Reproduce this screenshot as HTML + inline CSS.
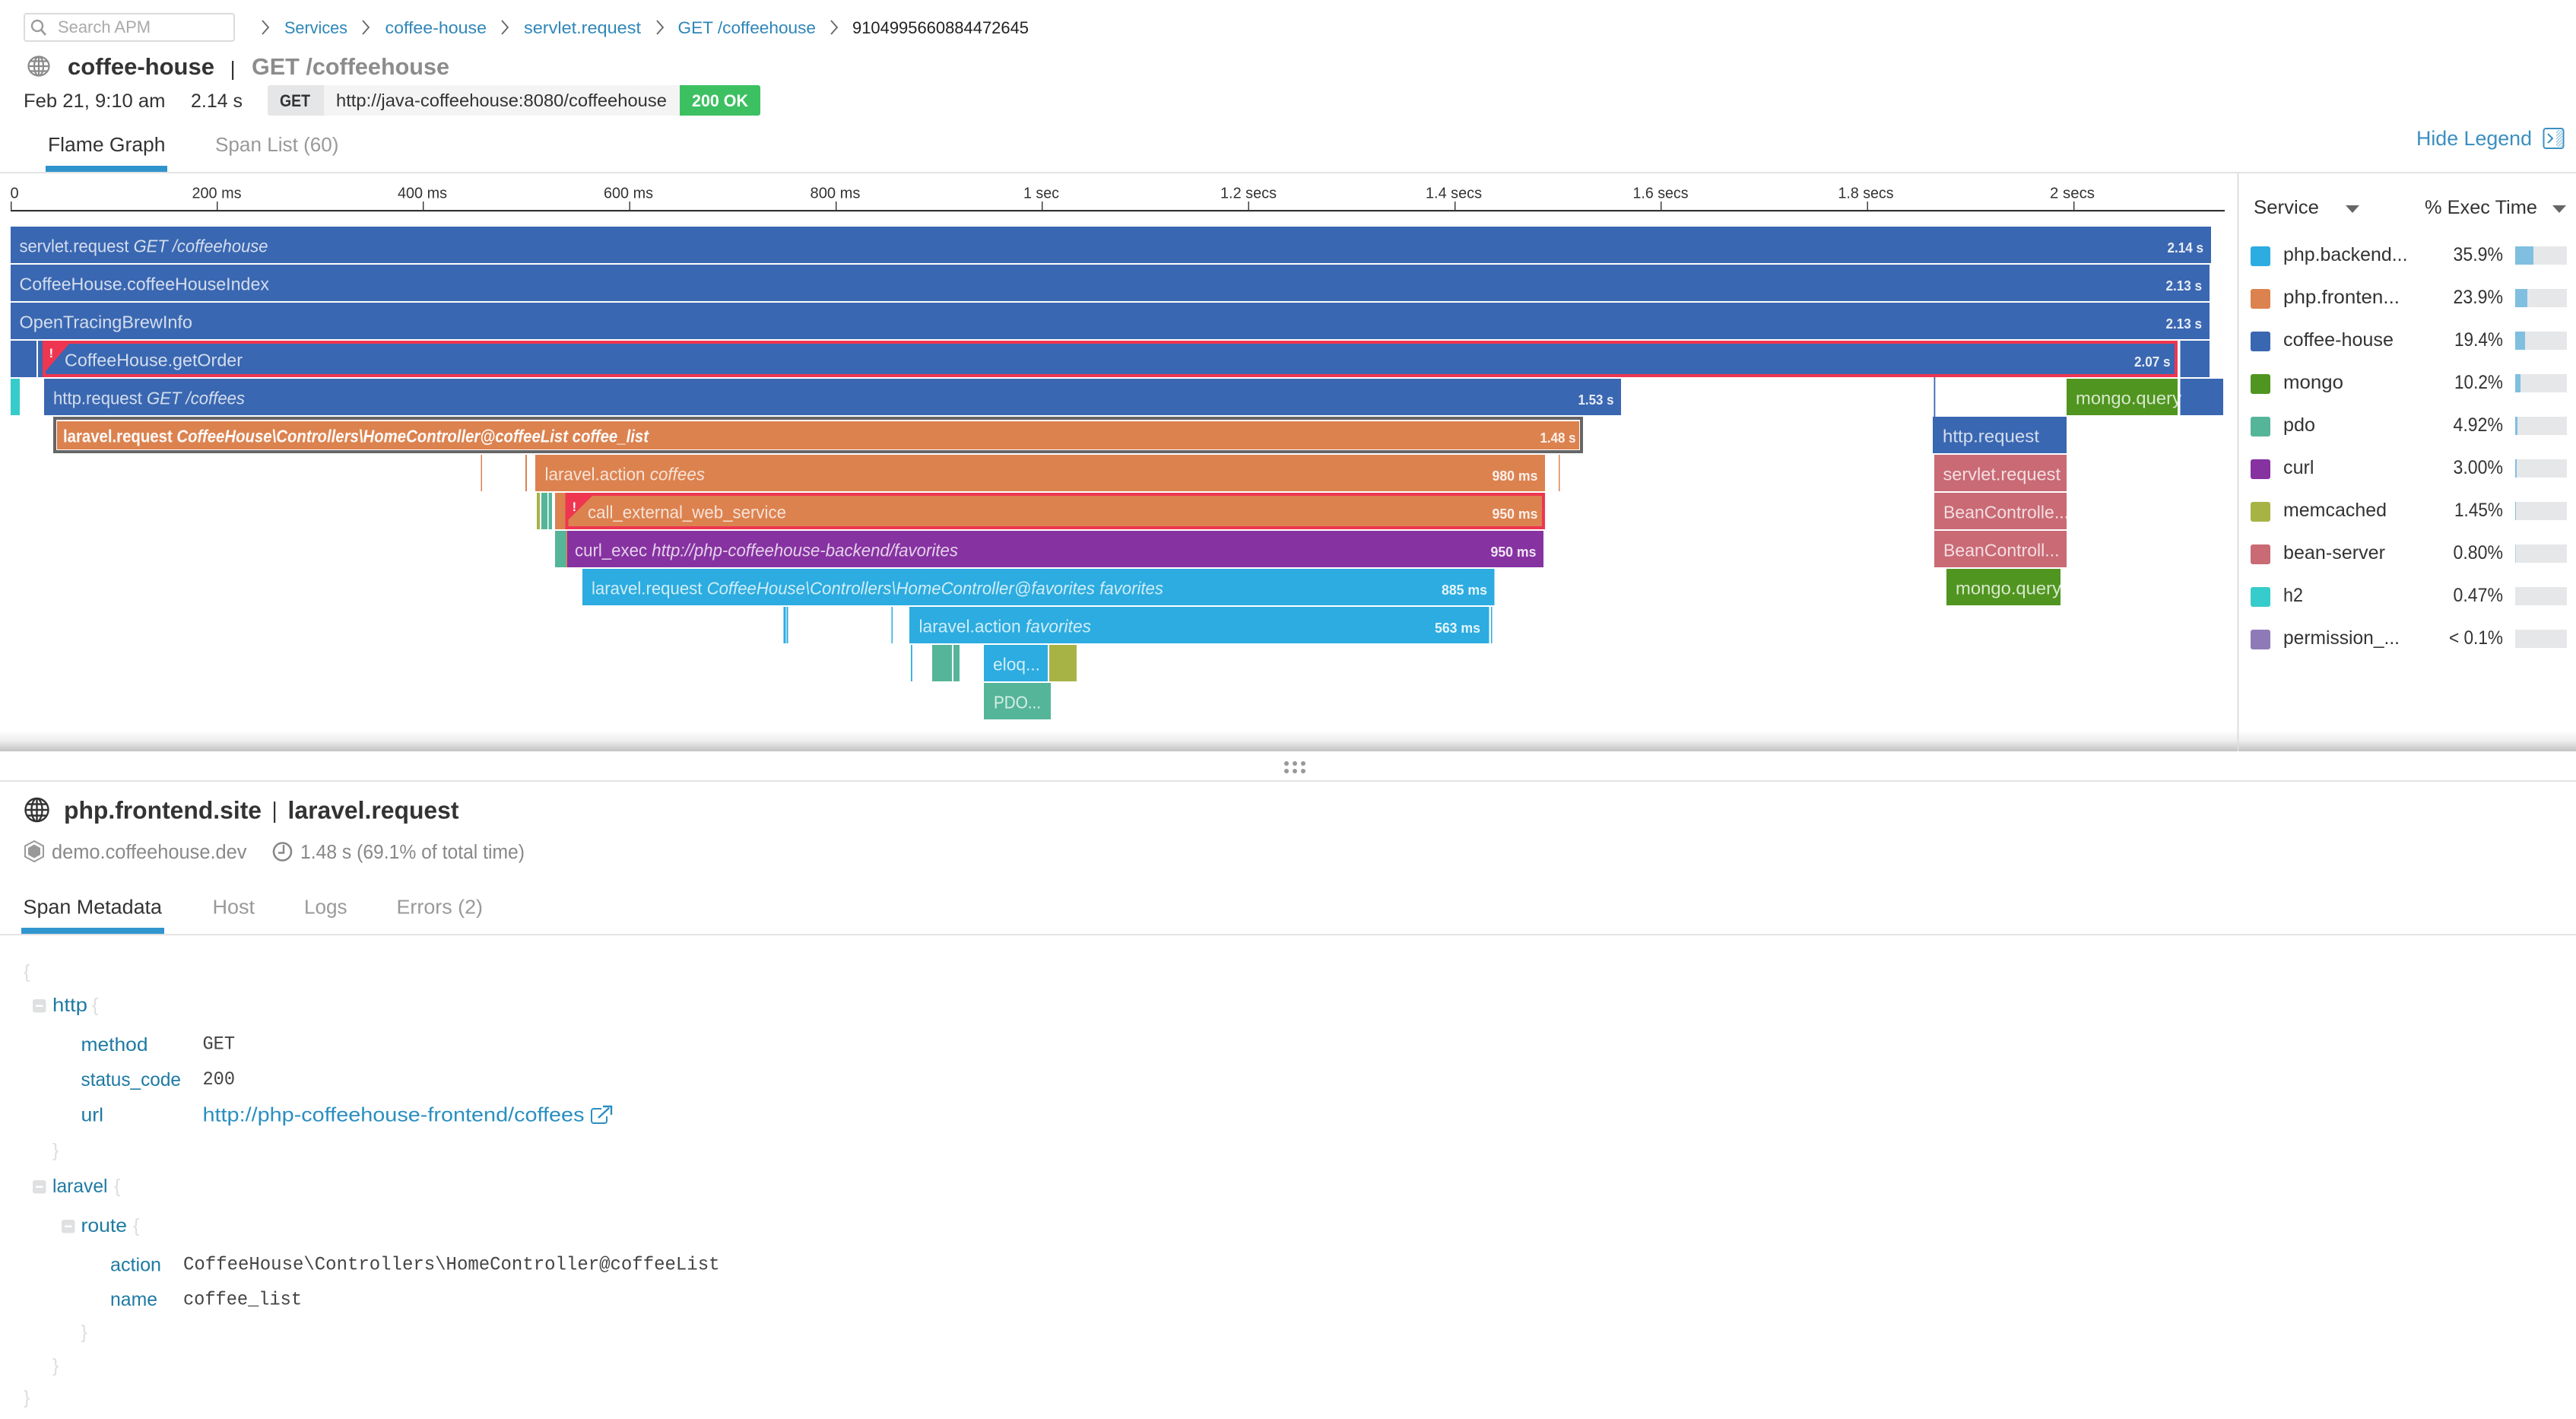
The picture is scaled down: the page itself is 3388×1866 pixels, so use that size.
<!DOCTYPE html>
<html><head><meta charset="utf-8"><title>coffee-house | GET /coffeehouse</title>
<style>
html,body{margin:0;padding:0;background:#fff;width:3388px;height:1866px;overflow:hidden}
svg{display:block}
text{font-family:"Liberation Sans",sans-serif;white-space:pre}
.b{font-size:23px;fill:#fff;fill-opacity:.78}
.d{font-size:18.5px;fill:#fff;fill-opacity:.88;font-weight:700}
.t{font-size:20px;fill:#333;text-anchor:middle}
.lk{font-size:22.5px;fill:#2f86b8}
.c{font-size:21.6px;fill:#666}
.lg{font-size:25px;fill:#333}
.k{font-size:25px;fill:#1e7aa3}
.m{font-family:"Liberation Mono",monospace;font-size:25px;fill:#444}
.br{font-size:25px;fill:#dedede}
.i{font-style:italic}
</style></head><body>
<svg width="3388" height="1866" viewBox="0 0 3388 1866" xmlns="http://www.w3.org/2000/svg">
<defs>
<linearGradient id="sh" x1="0" y1="0" x2="0" y2="1"><stop offset="0" stop-color="#fff"/><stop offset=".5" stop-color="#eee"/><stop offset="1" stop-color="#c2c2c2"/></linearGradient>
<clipPath id="c1"><rect x="2544" y="648" width="174" height="48"/></clipPath>
<clipPath id="c2"><rect x="2560" y="748" width="150" height="48"/></clipPath>
<clipPath id="c3"><rect x="3362" y="171" width="8" height="22"/></clipPath>
</defs>
<rect width="3388" height="1866" fill="#fff"/>

<!-- top bar -->
<rect x="32" y="18" width="276" height="36" rx="3" fill="#fff" stroke="#dcdcdc" stroke-width="2"/>
<circle cx="49" cy="34" r="7" fill="none" stroke="#9a9a9a" stroke-width="2.4"/><path d="M54 39L60 46" stroke="#9a9a9a" stroke-width="2.6"/>
<text x="76" y="43" font-size="22.5" fill="#aaa" textLength="122" lengthAdjust="spacingAndGlyphs">Search APM</text>
<g fill="none" stroke="#666" stroke-width="1.8">
<path d="M345 27L353 36L345 45"/><path d="M477 27L485 36L477 45"/><path d="M660 27L668 36L660 45"/><path d="M864 27L872 36L864 45"/><path d="M1093 27L1101 36L1093 45"/>
</g>
<text class="lk" x="374" y="44" textLength="83" lengthAdjust="spacingAndGlyphs">Services</text>
<text class="lk" x="506.500" y="44" textLength="133.500" lengthAdjust="spacingAndGlyphs">coffee-house</text>
<text class="lk" x="689" y="44" textLength="154" lengthAdjust="spacingAndGlyphs">servlet.request</text>
<text class="lk" x="891.500" y="44" textLength="181.500" lengthAdjust="spacingAndGlyphs">GET /coffeehouse</text>
<text x="1121" y="44" font-size="22.5" fill="#222" textLength="232" lengthAdjust="spacingAndGlyphs">9104995660884472645</text>

<!-- title -->
<g fill="none" stroke="#8a8a8a" stroke-width="2.2"><ellipse cx="51" cy="87" rx="13.500" ry="12.500"/><ellipse cx="51" cy="87" rx="6" ry="12.500"/><path d="M51 74.500V99.500M37.500 87H64.500M39.500 80.500H62.500M39.500 93.500H62.500"/></g>
<text x="89" y="98" font-size="31" font-weight="700" fill="#333" textLength="193" lengthAdjust="spacingAndGlyphs">coffee-house</text>
<rect x="305" y="80" width="2.200" height="25" fill="#333"/>
<text x="331" y="98" font-size="31" font-weight="700" fill="#8c8c8c" textLength="260" lengthAdjust="spacingAndGlyphs">GET /coffeehouse</text>

<text x="31" y="141" font-size="25" fill="#333" textLength="186.500" lengthAdjust="spacingAndGlyphs">Feb 21, 9:10 am</text>
<text x="251" y="141" font-size="25" fill="#333" textLength="68" lengthAdjust="spacingAndGlyphs">2.14 s</text>
<path d="M355 112H894V152H355a3 3 0 0 1-3-3V115a3 3 0 0 1 3-3Z" fill="#f4f4f5"/>
<path d="M355 112H426V152H355a3 3 0 0 1-3-3V115a3 3 0 0 1 3-3Z" fill="#e5e6e8"/>
<path d="M894 112H997a3 3 0 0 1 3 3V149a3 3 0 0 1-3 3H894Z" fill="#3cc062"/>
<text x="368" y="140" font-size="22" font-weight="700" fill="#333" textLength="40" lengthAdjust="spacingAndGlyphs">GET</text>
<text x="442" y="140" font-size="23" fill="#333" textLength="435" lengthAdjust="spacingAndGlyphs">http://java-coffeehouse:8080/coffeehouse</text>
<text x="910" y="140" font-size="22" font-weight="700" fill="#fff" textLength="74" lengthAdjust="spacingAndGlyphs">200 OK</text>

<text x="63" y="199" font-size="25.500" fill="#333" textLength="154.500" lengthAdjust="spacingAndGlyphs">Flame Graph</text>
<text x="283" y="199" font-size="25.500" fill="#999" textLength="162.500" lengthAdjust="spacingAndGlyphs">Span List (60)</text>
<rect x="0" y="226" width="3388" height="2" fill="#e3e3e3"/>
<rect x="60" y="218" width="160" height="8" fill="#2f93cc"/>

<text x="3178" y="191" font-size="27" fill="#3b8fc0" textLength="152" lengthAdjust="spacingAndGlyphs">Hide Legend</text>
<rect x="3345.500" y="169" width="26" height="26" rx="3" fill="none" stroke="#3b8fc0" stroke-width="2"/>
<path d="M3351 176L3357 182L3351 188" fill="none" stroke="#3b8fc0" stroke-width="2"/>
<g clip-path="url(#c3)" stroke="#8fc0dc" stroke-width="1.2"><path d="M3358 175L3372 161M3358 179L3372 165M3358 183L3372 169M3358 187L3372 173M3358 191L3372 177M3358 195L3372 181M3358 199L3372 185M3358 203L3372 189"/></g>

<!-- axis -->
<rect x="14" y="276" width="2912" height="2.200" fill="#333"/>
<g fill="#333"><rect x="14" y="265" width="1.400" height="11"/><rect x="285" y="265" width="1.400" height="11"/><rect x="556" y="265" width="1.400" height="11"/><rect x="827.500" y="265" width="1.400" height="11"/><rect x="1099" y="265" width="1.400" height="11"/><rect x="1370" y="265" width="1.400" height="11"/><rect x="1641.500" y="265" width="1.400" height="11"/><rect x="1913" y="265" width="1.400" height="11"/><rect x="2184" y="265" width="1.400" height="11"/><rect x="2455.500" y="265" width="1.400" height="11"/><rect x="2727" y="265" width="1.400" height="11"/></g>
<text class="t" x="19" y="260.500">0</text>
<text class="t" x="285" y="260.500" textLength="65" lengthAdjust="spacingAndGlyphs" style="text-anchor:start" dx="-32.500">200 ms</text>
<text class="t" x="556" y="260.500" textLength="65" lengthAdjust="spacingAndGlyphs" style="text-anchor:start" dx="-33">400 ms</text>
<text class="t" x="827" y="260.500" textLength="65" lengthAdjust="spacingAndGlyphs" style="text-anchor:start" dx="-33">600 ms</text>
<text class="t" x="1098.500" y="260.500" textLength="66" lengthAdjust="spacingAndGlyphs" style="text-anchor:start" dx="-33">800 ms</text>
<text class="t" x="1370" y="260.500" textLength="47" lengthAdjust="spacingAndGlyphs" style="text-anchor:start" dx="-24">1 sec</text>
<text class="t" x="1642" y="260.500" textLength="74" lengthAdjust="spacingAndGlyphs" style="text-anchor:start" dx="-37">1.2 secs</text>
<text class="t" x="1912" y="260.500" textLength="74" lengthAdjust="spacingAndGlyphs" style="text-anchor:start" dx="-37">1.4 secs</text>
<text class="t" x="2183.500" y="260.500" textLength="73" lengthAdjust="spacingAndGlyphs" style="text-anchor:start" dx="-36">1.6 secs</text>
<text class="t" x="2454.500" y="260.500" textLength="73" lengthAdjust="spacingAndGlyphs" style="text-anchor:start" dx="-37">1.8 secs</text>
<text class="t" x="2725.500" y="260.500" textLength="59" lengthAdjust="spacingAndGlyphs" style="text-anchor:start" dx="-29.500">2 secs</text>

<!-- flame bars -->
<g fill="#3a67b1">
<rect x="14" y="298" width="2894" height="48"/>
<rect x="14" y="348" width="2892" height="48"/>
<rect x="14" y="398" width="2892" height="48"/>
<rect x="14" y="448" width="34" height="48"/>
<rect x="50" y="448" width="6" height="48"/>
<rect x="2867.500" y="448" width="38.500" height="48"/>
<rect x="58" y="498" width="2074" height="48"/>
<rect x="2543.500" y="496" width="1.800" height="52"/>
<rect x="2867.500" y="498" width="56.500" height="48"/>
<rect x="2542" y="548" width="176" height="48"/>
</g>
<rect x="58" y="450" width="2804" height="44" fill="#3a67b1" stroke="#ee3650" stroke-width="4"/>
<polygon points="59,452 91,452 60,488 59,488" fill="#ee3650"/>
<text x="64.500" y="470" font-size="17" fill="#fff" font-weight="700">!</text>
<rect x="14" y="498" width="12" height="48" fill="#36cccb"/>
<rect x="2718" y="498" width="146" height="48" fill="#4f951f"/>

<rect x="72" y="550" width="2008" height="44" fill="#fff" stroke="#666" stroke-width="4"/>
<rect x="75" y="554" width="2002" height="37" fill="#dc824f"/>

<g fill="#dc824f">
<rect x="632.500" y="598" width="1.500" height="48"/>
<rect x="691" y="598" width="2" height="48"/>
<rect x="704" y="598" width="1328" height="48"/>
<rect x="2050" y="598" width="1.500" height="48"/>
<rect x="730" y="648" width="14" height="48"/>
<rect x="744.500" y="698" width="1.500" height="48"/>
</g>
<rect x="706" y="648" width="4" height="48" fill="#a8b345"/>
<rect x="712" y="648" width="8" height="48" fill="#55b598"/>
<rect x="721.500" y="648" width="4.500" height="48" fill="#55b598"/>
<rect x="745.500" y="650" width="1284.500" height="44" fill="#dc824f" stroke="#ee3650" stroke-width="4"/>
<polygon points="747,652 779,652 748,683 747,683" fill="#ee3650"/>
<text x="752.500" y="672" font-size="17" fill="#fff" font-weight="700">!</text>
<rect x="730" y="698" width="14.500" height="48" fill="#55b598"/>
<rect x="746" y="698" width="1284" height="48" fill="#8632a1"/>
<g fill="#2cace0">
<rect x="766" y="748" width="1199.500" height="48"/>
<rect x="1030.500" y="798" width="3" height="48"/>
<rect x="1034.500" y="798" width="2" height="48"/>
<rect x="1172.500" y="798" width="1.500" height="48"/>
<rect x="1196" y="798" width="762.500" height="48"/>
<rect x="1961" y="798" width="1.500" height="48"/>
<rect x="1198" y="848" width="1.800" height="48"/>
<rect x="1294" y="848" width="84" height="48"/>
</g>
<rect x="1226" y="848" width="26" height="48" fill="#55b598"/>
<rect x="1254" y="848" width="8" height="48" fill="#55b598"/>
<rect x="1380" y="848" width="36" height="48" fill="#a8b345"/>
<rect x="1294" y="898" width="88" height="48" fill="#55b598"/>
<rect x="2544" y="598" width="174" height="48" fill="#c96a75"/>
<rect x="2544" y="648" width="174" height="48" fill="#c96a75"/>
<rect x="2544" y="698" width="174" height="48" fill="#c96a75"/>
<rect x="2560" y="748" width="150" height="48" fill="#4f951f"/>

<!-- bar labels -->
<text class="b" x="25.500" y="331.500" textLength="327" lengthAdjust="spacingAndGlyphs">servlet.request <tspan class="i">GET /coffeehouse</tspan></text>
<text class="b" x="25.500" y="381.500" textLength="328.500" lengthAdjust="spacingAndGlyphs">CoffeeHouse.coffeeHouseIndex</text>
<text class="b" x="25.500" y="431.500" textLength="227.500" lengthAdjust="spacingAndGlyphs">OpenTracingBrewInfo</text>
<text class="b" x="85" y="481.500" textLength="234" lengthAdjust="spacingAndGlyphs">CoffeeHouse.getOrder</text>
<text class="b" x="70" y="531.500" textLength="252" lengthAdjust="spacingAndGlyphs">http.request <tspan class="i">GET /coffees</tspan></text>
<text class="b" x="83" y="581.500" textLength="770" lengthAdjust="spacingAndGlyphs" font-weight="700" style="fill-opacity:.97">laravel.request <tspan class="i">CoffeeHouse\Controllers\HomeController@coffeeList coffee_list</tspan></text>
<text class="b" x="716.500" y="631.500" textLength="210.500" lengthAdjust="spacingAndGlyphs">laravel.action <tspan class="i">coffees</tspan></text>
<text class="b" x="773" y="681.500" textLength="261" lengthAdjust="spacingAndGlyphs">call_external_web_service</text>
<text class="b" x="756" y="731.500" textLength="504" lengthAdjust="spacingAndGlyphs">curl_exec <tspan class="i">http://php-coffeehouse-backend/favorites</tspan></text>
<text class="b" x="778" y="781.500" textLength="752" lengthAdjust="spacingAndGlyphs">laravel.request <tspan class="i">CoffeeHouse\Controllers\HomeController@favorites favorites</tspan></text>
<text class="b" x="1208.500" y="831.500" textLength="226.500" lengthAdjust="spacingAndGlyphs">laravel.action <tspan class="i">favorites</tspan></text>
<text class="b" x="1306" y="881.500" textLength="62" lengthAdjust="spacingAndGlyphs">eloq...</text>
<text class="b" x="1307" y="931.500" textLength="62" lengthAdjust="spacingAndGlyphs">PDO...</text>
<text class="b" x="2555" y="581.500" textLength="127" lengthAdjust="spacingAndGlyphs">http.request</text>
<text class="b" x="2555.500" y="631.500" textLength="154.500" lengthAdjust="spacingAndGlyphs">servlet.request</text>
<text class="b" x="2556" y="681.500" textLength="165" lengthAdjust="spacingAndGlyphs" clip-path="url(#c1)">BeanControlle...</text>
<text class="b" x="2556" y="731.500" textLength="152.500" lengthAdjust="spacingAndGlyphs">BeanControll...</text>
<text class="b" x="2730" y="531.500" textLength="139" lengthAdjust="spacingAndGlyphs">mongo.query</text>
<text class="b" x="2572" y="781.500" textLength="139" lengthAdjust="spacingAndGlyphs" clip-path="url(#c2)">mongo.query</text>

<!-- durations -->
<text class="d" x="2850.500" y="332" textLength="47.500" lengthAdjust="spacingAndGlyphs">2.14 s</text>
<text class="d" x="2848.500" y="382" textLength="47.500" lengthAdjust="spacingAndGlyphs">2.13 s</text>
<text class="d" x="2848.500" y="432" textLength="47.500" lengthAdjust="spacingAndGlyphs">2.13 s</text>
<text class="d" x="2807" y="482" textLength="47.500" lengthAdjust="spacingAndGlyphs">2.07 s</text>
<text class="d" x="2075.500" y="532" textLength="47" lengthAdjust="spacingAndGlyphs">1.53 s</text>
<text class="d" x="2025.500" y="582" textLength="47" lengthAdjust="spacingAndGlyphs">1.48 s</text>
<text class="d" x="1962.500" y="632" textLength="60" lengthAdjust="spacingAndGlyphs">980 ms</text>
<text class="d" x="1962.500" y="682" textLength="60" lengthAdjust="spacingAndGlyphs">950 ms</text>
<text class="d" x="1960.500" y="732" textLength="60" lengthAdjust="spacingAndGlyphs">950 ms</text>
<text class="d" x="1896" y="782" textLength="60" lengthAdjust="spacingAndGlyphs">885 ms</text>
<text class="d" x="1887" y="832" textLength="60" lengthAdjust="spacingAndGlyphs">563 ms</text>

<!-- legend -->
<text class="lg" x="2964" y="281" textLength="86" lengthAdjust="spacingAndGlyphs">Service</text>
<polygon points="3085,270 3103,270 3094,280" fill="#666"/>
<text class="lg" x="3189" y="281" textLength="148" lengthAdjust="spacingAndGlyphs">% Exec Time</text>
<polygon points="3357,270 3375,270 3366,280" fill="#666"/>

<g>
<rect x="2960" y="324" width="26" height="26" rx="3" fill="#2cace0"/>
<rect x="2960" y="380" width="26" height="26" rx="3" fill="#dc824f"/>
<rect x="2960" y="436" width="26" height="26" rx="3" fill="#3a67b1"/>
<rect x="2960" y="492" width="26" height="26" rx="3" fill="#4f951f"/>
<rect x="2960" y="548" width="26" height="26" rx="3" fill="#55b598"/>
<rect x="2960" y="604" width="26" height="26" rx="3" fill="#8632a1"/>
<rect x="2960" y="660" width="26" height="26" rx="3" fill="#a8b345"/>
<rect x="2960" y="716" width="26" height="26" rx="3" fill="#c96a75"/>
<rect x="2960" y="772" width="26" height="26" rx="3" fill="#36cccb"/>
<rect x="2960" y="828" width="26" height="26" rx="3" fill="#8f7ab8"/>
</g>
<text class="lg" x="3003" y="343" textLength="163.500" lengthAdjust="spacingAndGlyphs">php.backend...</text>
<text class="lg" x="3003" y="399" textLength="153" lengthAdjust="spacingAndGlyphs">php.fronten...</text>
<text class="lg" x="3003" y="455" textLength="145" lengthAdjust="spacingAndGlyphs">coffee-house</text>
<text class="lg" x="3003" y="511" textLength="79" lengthAdjust="spacingAndGlyphs">mongo</text>
<text class="lg" x="3003" y="567" textLength="42" lengthAdjust="spacingAndGlyphs">pdo</text>
<text class="lg" x="3003" y="623" textLength="40.500" lengthAdjust="spacingAndGlyphs">curl</text>
<text class="lg" x="3003" y="679" textLength="136" lengthAdjust="spacingAndGlyphs">memcached</text>
<text class="lg" x="3003" y="735" textLength="134" lengthAdjust="spacingAndGlyphs">bean-server</text>
<text class="lg" x="3003" y="791" textLength="26" lengthAdjust="spacingAndGlyphs">h2</text>
<text class="lg" x="3003" y="847" textLength="153" lengthAdjust="spacingAndGlyphs">permission_...</text>

<text class="lg" x="3226.500" y="343" textLength="65.500" lengthAdjust="spacingAndGlyphs">35.9%</text>
<text class="lg" x="3226.500" y="399" textLength="65.500" lengthAdjust="spacingAndGlyphs">23.9%</text>
<text class="lg" x="3228" y="455" textLength="64" lengthAdjust="spacingAndGlyphs">19.4%</text>
<text class="lg" x="3228" y="511" textLength="64" lengthAdjust="spacingAndGlyphs">10.2%</text>
<text class="lg" x="3226.500" y="567" textLength="65.500" lengthAdjust="spacingAndGlyphs">4.92%</text>
<text class="lg" x="3226.500" y="623" textLength="65.500" lengthAdjust="spacingAndGlyphs">3.00%</text>
<text class="lg" x="3228" y="679" textLength="64" lengthAdjust="spacingAndGlyphs">1.45%</text>
<text class="lg" x="3226.500" y="735" textLength="65.500" lengthAdjust="spacingAndGlyphs">0.80%</text>
<text class="lg" x="3226.500" y="791" textLength="65.500" lengthAdjust="spacingAndGlyphs">0.47%</text>
<text class="lg" x="3221" y="847" textLength="71" lengthAdjust="spacingAndGlyphs">&lt; 0.1%</text>

<g fill="#e6e7e9">
<rect x="3308" y="324" width="68" height="24"/><rect x="3308" y="380" width="68" height="24"/><rect x="3308" y="436" width="68" height="24"/><rect x="3308" y="492" width="68" height="24"/><rect x="3308" y="548" width="68" height="24"/><rect x="3308" y="604" width="68" height="24"/><rect x="3308" y="660" width="68" height="24"/><rect x="3308" y="716" width="68" height="24"/><rect x="3308" y="772" width="68" height="24"/><rect x="3308" y="828" width="68" height="24"/>
</g>
<g fill="#80bfe0">
<rect x="3308" y="324" width="24" height="24"/><rect x="3308" y="380" width="16" height="24"/><rect x="3308" y="436" width="13" height="24"/><rect x="3308" y="492" width="7" height="24"/><rect x="3308" y="548" width="3" height="24"/><rect x="3308" y="604" width="2" height="24"/><rect x="3308" y="660" width="1" height="24"/><rect x="3308" y="716" width="1" height="24" opacity=".5"/>
</g>

<!-- splitter -->
<rect x="0" y="960" width="3388" height="28" fill="url(#sh)"/>
<rect x="2942.500" y="228" width="2" height="760" fill="#dedede"/>
<g fill="#999"><circle cx="1692" cy="1004" r="3"/><circle cx="1703" cy="1004" r="3"/><circle cx="1714" cy="1004" r="3"/><circle cx="1692" cy="1014" r="3"/><circle cx="1703" cy="1014" r="3"/><circle cx="1714" cy="1014" r="3"/></g>
<rect x="0" y="1026" width="3388" height="2" fill="#e3e3e3"/>

<!-- detail header -->
<g fill="none" stroke="#333" stroke-width="2.400"><circle cx="48.500" cy="1065" r="15"/><ellipse cx="48.500" cy="1065" rx="7" ry="15"/><path d="M48.500 1050V1080M33.500 1065H63.500M36 1057.500H61M36 1072.500H61"/></g>
<text x="84" y="1076.500" font-size="32" font-weight="700" fill="#333" textLength="260" lengthAdjust="spacingAndGlyphs">php.frontend.site</text>
<rect x="360" y="1054" width="2.200" height="28" fill="#333"/>
<text x="378.500" y="1076.500" font-size="32" font-weight="700" fill="#333" textLength="225" lengthAdjust="spacingAndGlyphs">laravel.request</text>

<polygon points="45,1106 57,1112.500 57,1126.500 45,1133 33,1126.500 33,1112.500" fill="none" stroke="#999" stroke-width="2"/>
<polygon points="45,1110.500 53,1115 53,1124 45,1128.500 37,1124 37,1115" fill="#999"/>
<text x="68" y="1129" font-size="25.500" fill="#888" textLength="256.500" lengthAdjust="spacingAndGlyphs">demo.coffeehouse.dev</text>
<circle cx="371.500" cy="1120" r="11.500" fill="none" stroke="#888" stroke-width="2.600"/><path d="M373 1111V1121.500H366" fill="none" stroke="#888" stroke-width="2.400"/>
<text x="395" y="1129" font-size="25.500" fill="#888" textLength="295" lengthAdjust="spacingAndGlyphs">1.48 s (69.1% of total time)</text>

<text x="30.500" y="1201.500" font-size="25.500" fill="#333" textLength="182.500" lengthAdjust="spacingAndGlyphs">Span Metadata</text>
<text x="279.500" y="1201.500" font-size="25.500" fill="#999" textLength="55.500" lengthAdjust="spacingAndGlyphs">Host</text>
<text x="400" y="1201.500" font-size="25.500" fill="#999" textLength="56.500" lengthAdjust="spacingAndGlyphs">Logs</text>
<text x="521.500" y="1201.500" font-size="25.500" fill="#999" textLength="113.500" lengthAdjust="spacingAndGlyphs">Errors (2)</text>
<rect x="0" y="1228" width="3388" height="2" fill="#e3e3e3"/>
<rect x="28" y="1220" width="188" height="8" fill="#3196cf"/>

<!-- metadata tree -->
<text class="br" x="31" y="1286">{</text>
<rect x="43" y="1314" width="17.500" height="17.500" rx="3" fill="#dfe0e2"/><rect x="47" y="1321.500" width="9.500" height="2.500" fill="#fff"/>
<text class="k" x="69" y="1330" textLength="46" lengthAdjust="spacingAndGlyphs">http</text>
<text class="br" x="121" y="1330">{</text>
<text class="k" x="106.500" y="1382" textLength="88" lengthAdjust="spacingAndGlyphs">method</text>
<text class="m" x="266.500" y="1379.500" textLength="42.500" lengthAdjust="spacingAndGlyphs">GET</text>
<text class="k" x="106.500" y="1428" textLength="131.500" lengthAdjust="spacingAndGlyphs">status_code</text>
<text class="m" x="266.500" y="1426" textLength="42.500" lengthAdjust="spacingAndGlyphs">200</text>
<text class="k" x="106.500" y="1474.500" textLength="29.500" lengthAdjust="spacingAndGlyphs">url</text>
<text x="266.500" y="1474.500" font-size="26" fill="#2a8fc0" textLength="502" lengthAdjust="spacingAndGlyphs">http://php-coffeehouse-frontend/coffees</text>
<path d="M791 1458H781a3 3 0 0 0-3 3V1474a3 3 0 0 0 3 3H795a3 3 0 0 0 3-3V1468" fill="none" stroke="#2a8fc0" stroke-width="2"/>
<path d="M787 1470L801 1457M793 1455H804V1466" fill="none" stroke="#2a8fc0" stroke-width="2.400"/>
<text class="br" x="69" y="1521">}</text>
<rect x="43" y="1552" width="17.500" height="17.500" rx="3" fill="#dfe0e2"/><rect x="47" y="1559.500" width="9.500" height="2.500" fill="#fff"/>
<text class="k" x="69" y="1568" textLength="72.500" lengthAdjust="spacingAndGlyphs">laravel</text>
<text class="br" x="150" y="1568">{</text>
<rect x="81" y="1604" width="17.500" height="17.500" rx="3" fill="#dfe0e2"/><rect x="85" y="1611.500" width="9.500" height="2.500" fill="#fff"/>
<text class="k" x="106.500" y="1620" textLength="60.500" lengthAdjust="spacingAndGlyphs">route</text>
<text class="br" x="175" y="1620">{</text>
<text class="k" x="145" y="1671.500" textLength="67" lengthAdjust="spacingAndGlyphs">action</text>
<text class="m" x="241" y="1669.500" textLength="705.500" lengthAdjust="spacingAndGlyphs">CoffeeHouse\Controllers\HomeController@coffeeList</text>
<text class="k" x="145" y="1717" textLength="62" lengthAdjust="spacingAndGlyphs">name</text>
<text class="m" x="241" y="1715.500" textLength="156" lengthAdjust="spacingAndGlyphs">coffee_list</text>
<text class="br" x="106.500" y="1760">}</text>
<text class="br" x="69" y="1804">}</text>
<text class="br" x="31" y="1846">}</text>
</svg>
</body></html>
